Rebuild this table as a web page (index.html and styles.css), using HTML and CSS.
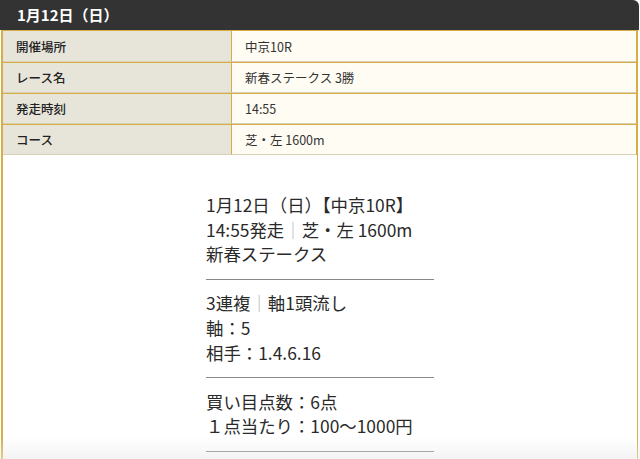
FILE: index.html
```html
<!DOCTYPE html>
<html lang="ja">
<head>
<meta charset="utf-8">
<title>1月12日（日）</title>
<link rel="stylesheet" href="styles.css">
</head>
<body>
<div class="wrap">
  <div class="head">1月12日（日）</div>
  <table class="info">
    <tr><th>開催場所</th><td>中京10R</td></tr>
    <tr><th>レース名</th><td>新春ステークス 3勝</td></tr>
    <tr><th>発走時刻</th><td>14:55</td></tr>
    <tr><th>コース</th><td>芝・左 1600m</td></tr>
  </table>
  <div class="body">
    <div class="pick">
      <p>1月12日（日）【中京10R】<br>14:55発走<span class="bar">｜</span>芝・左 1600m<br>新春ステークス</p>
      <hr>
      <p>3連複<span class="bar">｜</span>軸1頭流し<br>軸：5<br>相手：1.4.6.16</p>
      <hr>
      <p>買い目点数：6点<br>１点当たり：100〜1000円</p>
      <hr>
    </div>
  </div>
</div>
<div class="fade"></div>
</body>
</html>
```

FILE: styles.css
```css
html, body {
  margin: 0;
  padding: 0;
  background: #fff;
}
body {
  font-family: "Noto Sans CJK JP", "Noto Sans", sans-serif;
  color: #222;
}
.wrap {
  width: 637px;
  margin-left: 1px;
}
.head {
  height: 30px;
  box-sizing: border-box;
  background: #333;
  color: #fff;
  font-weight: bold;
  font-size: 15px;
  line-height: 30px;
  padding-left: 17px;
  border-radius: 0 6px 0 0;
  margin-left: -1px;
  margin-right: -1px;
}
.info {
  width: 100%;
  border-collapse: separate;
  border-spacing: 0;
  border-left: 2px solid #d6ae45;
  border-right: 2px solid #d6ae45;
  border-top: 1px solid #d6ae45;
  font-size: 12.5px;
}
.info th, .info td {
  height: 29px;
  padding: 0 0 0 13px;
  text-align: left;
  border-bottom: 1px solid #d9d0b6;
  border-top: 1px solid #d6ae45;
}
.info tr:first-child th, .info tr:first-child td {
  border-top: none;
  height: 30px;
}
.info th {
  width: 215px;
  background: #e7e4da;
  font-weight: 500;
  color: #222;
  border-right: 1px solid #d6ae45;
}
.info td {
  background: #fffcf3;
  color: #333;
}
.body {
  border-left: 2px solid #d6ae45;
  border-right: 1px solid #d6ae45;
  padding-top: 38px;
  padding-bottom: 40px;
}
.pick {
  width: 228px;
  margin: 0 auto;
  font-size: 17.4px;
  line-height: 24.6px;
  color: #2a2a2a;
}
.pick p {
  margin: 0;
  white-space: nowrap;
}
.bar {
  color: #aaa;
  font-weight: 300;
}
.pick hr {
  border: none;
  border-top: 1px solid #888;
  margin: 12px 0 11.6px;
}
.fade {
  position: fixed;
  left: 0;
  right: 0;
  bottom: 0;
  height: 22px;
  background: linear-gradient(to bottom, rgba(235,235,235,0), rgba(232,232,232,0.5));
  pointer-events: none;
}
```
